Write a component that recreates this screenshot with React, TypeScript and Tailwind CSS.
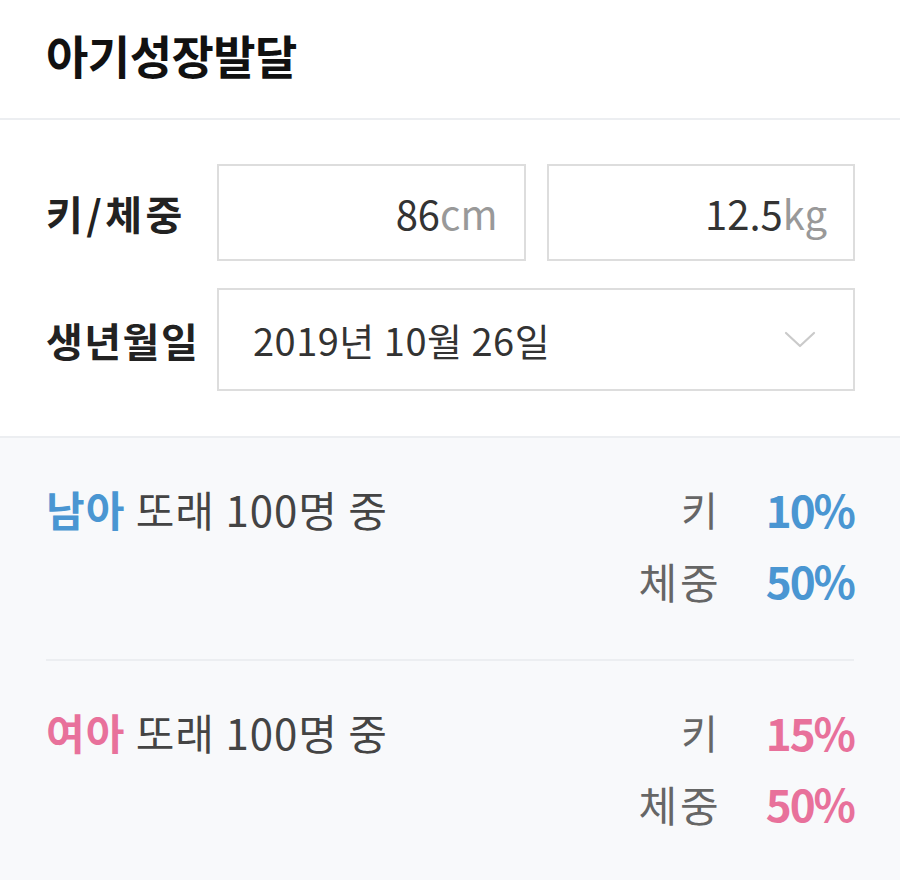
import React from 'react';

const font = { fontFamily: '"Noto Sans CJK KR", "Noto Sans", sans-serif' };

const ChevronDown = () => (
    <svg width="34" height="20" viewBox="0 0 34 20" fill="none">
        <path d="M3 3 L17 16 L31 3" stroke="#cacaca" strokeWidth="2.2" strokeLinecap="round" strokeLinejoin="round" />
    </svg>
);

const ResultBlock = ({ gender, color, height, weight }: { gender: string; color: string; height: string; weight: string }) => (
    <div className="flex justify-between pt-[43px] pb-[51px]">
        <div className="text-[42px] leading-[56px] text-[#444] tracking-[1px]">
            <span className={`font-bold ${color}`}>{gender}</span> 또래 100명 중
        </div>
        <div className="flex flex-col items-end gap-[15px]">
            <div className="flex items-center gap-[48px] h-[56px]">
                <span className="text-[40px] text-[#666]">키</span>
                <span className={`text-[44px] leading-[56px] font-bold tracking-[-2px] ${color}`}>{height}</span>
            </div>
            <div className="flex items-center gap-[44px] h-[56px]">
                <span className="text-[42px] text-[#666] tracking-[3px]">체중</span>
                <span className={`text-[44px] leading-[56px] font-bold tracking-[-2px] ${color}`}>{weight}</span>
            </div>
        </div>
    </div>
);

export default function App() {
    return (
        <div className="w-[900px] h-[880px] bg-[#f8f9fb] overflow-hidden" style={font}>
            {/* 헤더 */}
            <div className="h-[120px] bg-white border-b-2 border-[#eceef1] px-[46px] pt-[26px]">
                <h1 className="text-[46px] leading-[56px] font-bold text-[#111] tracking-[-0.5px]">아기성장발달</h1>
            </div>

            {/* 입력 폼 */}
            <div className="bg-white border-b-2 border-[#eceef1] pl-[46px] pr-[45px] pt-[44px] pb-[45px] flex flex-col gap-[27px]">
                <div className="flex items-center">
                    <div className="w-[171px] text-[40px] font-bold text-[#222] tracking-[3.5px]">키/체중</div>
                    <div className="flex-1 flex gap-[21px]">
                        <div className="flex-1 h-[97px] border-2 border-[#dddddd] flex items-center justify-end px-[26px] text-[40px] text-[#333]">
                            86<span className="text-[#999]">cm</span>
                        </div>
                        <div className="flex-1 h-[97px] border-2 border-[#dddddd] flex items-center justify-end px-[26px] text-[40px] text-[#333]">
                            12.5<span className="text-[#999]">kg</span>
                        </div>
                    </div>
                </div>
                <div className="flex items-center">
                    <div className="w-[171px] text-[40px] font-bold text-[#222] tracking-[1.5px]">생년월일</div>
                    <div className="flex-1 h-[103px] border-2 border-[#dddddd] flex items-center justify-between pl-[34px] pr-[36px] text-[38px] text-[#333] tracking-[0.5px]">
                        <span>2019년 10월 26일</span>
                        <ChevronDown />
                    </div>
                </div>
            </div>

            {/* 결과 */}
            <div className="px-[46px]">
                <ResultBlock gender="남아" color="text-[#4a96d2]" height="10%" weight="50%" />
                <div className="h-[2px] bg-[#eceef1]" />
                <ResultBlock gender="여아" color="text-[#e8719b]" height="15%" weight="50%" />
            </div>
        </div>
    );
}
